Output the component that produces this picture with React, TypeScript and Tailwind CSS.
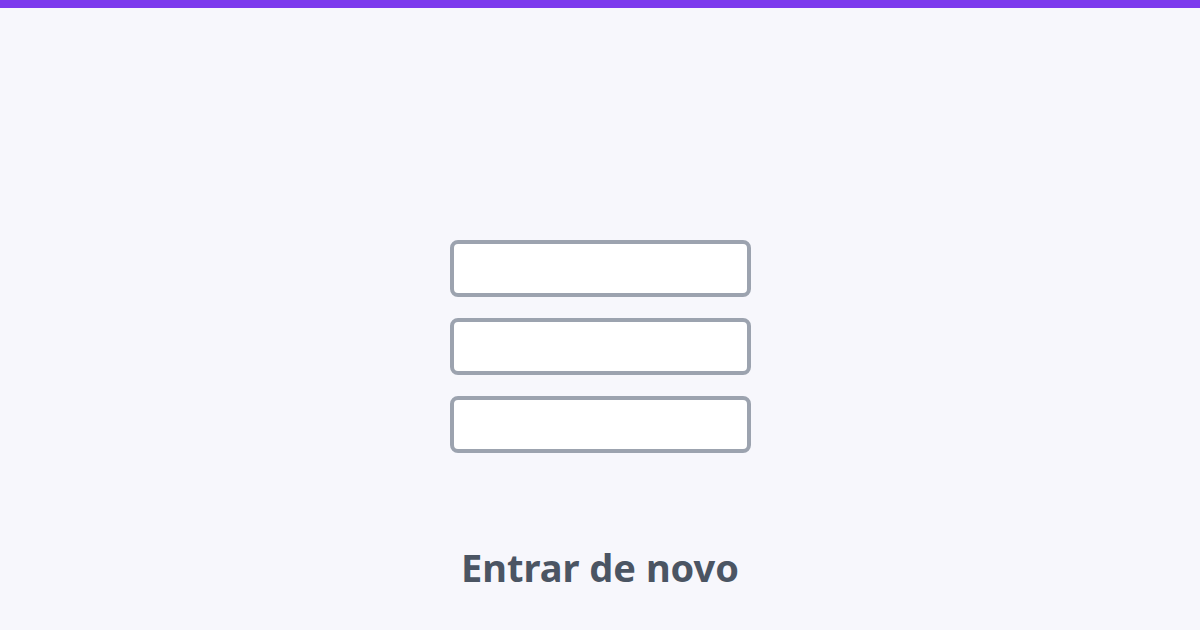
export default function App() {
  return (
    <div className="w-[1200px] h-[630px] bg-[#f7f7fc] flex flex-col overflow-hidden" style={{ fontFamily: '"Noto Sans", sans-serif' }}>
      {/* Top accent bar */}
      <div className="h-2 bg-[#7c3aed] shrink-0" />

      <div className="flex flex-col items-center pt-[232px]">
        {/* Placeholder inputs */}
        <div className="flex flex-col gap-[21px]">
          <div className="w-[301px] h-[57px] bg-white border-4 border-[#9ca3af] rounded-lg" />
          <div className="w-[301px] h-[57px] bg-white border-4 border-[#9ca3af] rounded-lg" />
          <div className="w-[301px] h-[57px] bg-white border-4 border-[#9ca3af] rounded-lg" />
        </div>

        <h1 className="mt-[86px] text-[38px] leading-[56px] font-bold text-[#4b5563]">Entrar de novo</h1>
      </div>
    </div>
  );
}
